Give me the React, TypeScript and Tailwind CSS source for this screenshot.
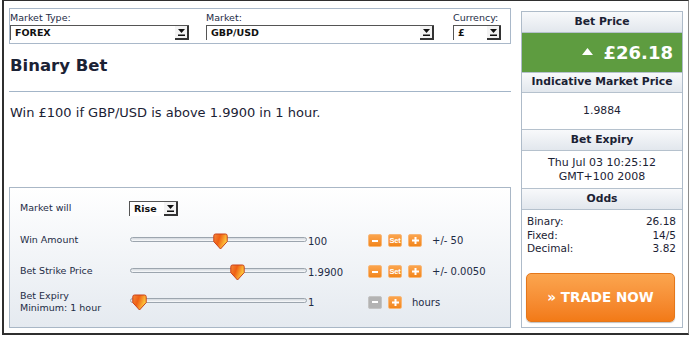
import React from "react"

const sliders = [
  { label: "Win Amount", pct: 51, value: "100", set: true, step: "+/- 50" },
  { label: "Bet Strike Price", pct: 61, value: "1.9900", set: true, step: "+/- 0.0050" },
]

const odds = [
  ["Binary:", "26.18"],
  ["Fixed:", "14/5"],
  ["Decimal:", "3.82"],
]

function Arrow() {
  return (
    <svg width="7" height="7" viewBox="0 0 7 7">
      <polygon points="0,0 7,0 3.5,4" fill="#111" />
      <rect x="0" y="5.5" width="7" height="1.5" fill="#111" />
    </svg>
  )
}

function Select({ value, className }: { value: string; className: string }) {
  return (
    <div className={`flex h-[15px] border-t border-l border-[#555] bg-white ${className}`}>
      <span className="flex-1 truncate pl-[4px] text-[9.5px] leading-[14px] font-bold text-[#111]">{value}</span>
      <span className="flex w-[14px] items-center justify-center border-r-2 border-b-2 border-[#333] bg-[#f3f3f3]">
        <Arrow />
      </span>
    </div>
  )
}

function Thumb() {
  return (
    <svg width="15" height="17" viewBox="0 0 15 17">
      <defs>
        <linearGradient id="tg" x1="0" y1="0" x2="1" y2="0.4">
          <stop offset="0" stopColor="#f58a3a" />
          <stop offset="0.45" stopColor="#ef5f14" />
          <stop offset="1" stopColor="#ffd23f" />
        </linearGradient>
      </defs>
      <path
        d="M2.5 1 H12.5 Q14.2 1 14.2 2.8 V8.6 L7.5 16 L0.8 8.6 V2.8 Q0.8 1 2.5 1 Z"
        fill="url(#tg)"
        stroke="#c9401a"
        strokeWidth="1"
      />
    </svg>
  )
}

function Slider({ pct }: { pct: number }) {
  return (
    <div className="relative h-[5px] w-[177px] rounded-full border border-[#9ca5ae] bg-linear-to-b from-[#d3d8de] to-[#fafbfc]">
      <div className="absolute top-[-5px]" style={{ left: `calc(${pct}% - 7.5px)` }}>
        <Thumb />
      </div>
    </div>
  )
}

function SmallButton({ kind, gray }: { kind: "minus" | "plus" | "set"; gray?: boolean }) {
  return (
    <span
      className={`flex h-[13px] w-[14px] items-center justify-center rounded-[2px] border ${
        gray ? "border-[#c4c4c4] bg-[#b3b3b3]" : "border-[#f8b777] bg-linear-to-b from-[#fba44c] to-[#f28619]"
      }`}
    >
      {kind === "minus" && <span className="h-[2px] w-[6px] bg-white" />}
      {kind === "plus" && (
        <svg width="7" height="7" viewBox="0 0 7 7">
          <rect x="0" y="2.5" width="7" height="2" fill="#fff" />
          <rect x="2.5" y="0" width="2" height="7" fill="#fff" />
        </svg>
      )}
      {kind === "set" && (
        <span className="text-[7.5px] leading-none font-bold tracking-[-0.3px] text-white font-['Liberation_Sans_Narrow','Liberation_Sans',sans-serif]">
          Set
        </span>
      )}
    </span>
  )
}

function Header({ children, className }: { children: React.ReactNode; className: string }) {
  return (
    <div
      className={`flex items-center justify-center border-[#b5c1cd] bg-linear-to-b from-[#f8f9fb] to-[#e2e7ed] text-[10.8px] font-bold text-[#1b2234] ${className}`}
    >
      {children}
    </div>
  )
}

function LeftColumn() {
  return (
    <div className="flex w-[502px] flex-col">
      {/* selects */}
      <div className="flex h-[36px] border border-[#a9b8c9] pt-[3px] text-[9.5px] leading-[12px] text-[#1d2b45]">
        <div className="w-[179px]">
          <div>Market Type:</div>
          <Select value="FOREX" className="mt-[1px] w-[179px]" />
        </div>
        <div className="ml-[17px] w-[228px]">
          <div>Market:</div>
          <Select value="GBP/USD" className="mt-[1px] w-[228px]" />
        </div>
        <div className="ml-[19px] w-[48px]">
          <div>Currency:</div>
          <Select value="£" className="mt-[1px] w-[48px]" />
        </div>
      </div>

      <div className="border-b border-[#a3b5c8] pt-[12px] pb-[15px] pl-[1px]">
        <h1 className="text-[16.5px] leading-[20px] font-bold text-[#1b2235]">Binary Bet</h1>
      </div>
      <p className="mt-[13px] pl-[1px] text-[13px] leading-[16px] text-[#1b2235]">
        Win £100 if GBP/USD is above 1.9900 in 1 hour.
      </p>

      {/* controls */}
      <div className="mt-auto h-[141px] border border-[#a9b7c6] bg-linear-to-b from-white to-[#e5eaf0] pt-[5px] pl-[10px] text-[9.5px] text-[#1d2b45]">
        <div className="flex h-[31px] items-center">
          <span className="w-[109px]">Market will</span>
          <div className="flex h-[15px] w-[49px] border-t border-l border-[#555] bg-white">
            <span className="flex-1 pl-[4px] text-[9.5px] leading-[14px] font-bold text-[#111]">Rise</span>
            <span className="flex w-[14px] items-center justify-center border-r-2 border-b-2 border-[#333] bg-[#f3f3f3]">
              <Arrow />
            </span>
          </div>
        </div>
        {sliders.map((s) => (
          <div key={s.label} className="flex h-[31px] items-center last:h-[30px]">
            <span className="w-[110px] pt-[2px]">{s.label}</span>
            <Slider pct={s.pct} />
            <span className="ml-[1px] w-[60px] pt-[3px] text-[10px]">{s.value}</span>
            <div className="flex gap-[6px] pt-[2px]">
              <SmallButton kind="minus" />
              <SmallButton kind="set" />
              <SmallButton kind="plus" />
            </div>
            <span className="ml-[10px] pt-[2px] text-[10px]">{s.step}</span>
          </div>
        ))}
        <div className="flex h-[32px] items-center">
          <span className="w-[110px] leading-[12.5px]">
            Bet Expiry
            <br />
            Minimum: 1 hour
          </span>
          <div className="mb-[3px]">
            <Slider pct={5} />
          </div>
          <span className="ml-[1px] w-[60px] text-[10px]">1</span>
          <div className="flex gap-[6px]">
            <SmallButton kind="minus" gray />
            <SmallButton kind="plus" />
          </div>
          <span className="ml-[10px] text-[10px]">hours</span>
        </div>
      </div>
    </div>
  )
}

function RightPanel() {
  return (
    <div className="mt-[3px] ml-[10px] flex h-[317px] w-[162px] flex-col border border-[#aebbc9] bg-white text-[#1b2234]">
      <Header className="h-[21px] border-b">Bet Price</Header>
      <div className="flex h-[39px] items-center justify-end bg-[#5e9c40] pr-[9px] text-white">
        <svg width="11" height="7" viewBox="0 0 11 7" className="mr-[11px] mb-[2px]">
          <polygon points="5.5,0 11,7 0,7" fill="#fff" />
        </svg>
        <span className="text-[18px] leading-none font-bold">£26.18</span>
      </div>
      <Header className="h-[21px] border-y">Indicative Market Price</Header>
      <div className="flex h-[36px] items-center justify-center text-[10.8px]">1.9884</div>
      <Header className="h-[22px] border-y">Bet Expiry</Header>
      <div className="flex h-[37px] flex-col items-center justify-center text-[11px] leading-[13.5px]">
        <span>Thu Jul 03 10:25:12</span>
        <span>GMT+100 2008</span>
      </div>
      <Header className="h-[22px] border-y">Odds</Header>
      <div className="pt-[5px] pr-[6px] pl-[5px] text-[10.5px] leading-[13.5px]">
        {odds.map(([k, v]) => (
          <div key={k} className="flex justify-between">
            <span>{k}</span>
            <span>{v}</span>
          </div>
        ))}
      </div>
      <div className="mt-[17px] pl-[4px]">
        <button className="flex h-[49px] w-[149px] items-center justify-center rounded-[5px] border border-[#e5771a] bg-linear-to-b from-[#fba54e] to-[#f27a16] text-[13.5px] font-bold text-white shadow-[0_1px_1px_rgba(0,0,0,0.25)]">
          » TRADE NOW
        </button>
      </div>
    </div>
  )
}

export default function App() {
  return (
    <div className="h-[340px] w-[695px] overflow-hidden bg-white font-['DejaVu_Sans',sans-serif]">
      <div className="ml-[2px] flex h-[335px] w-[687px] border-t border-r border-b-2 border-l-2 border-[#2f2f2f] border-r-[#8c8c8c] pt-[7px] pb-[5px] pl-[5px]">
        <LeftColumn />
        <RightPanel />
      </div>
    </div>
  )
}
